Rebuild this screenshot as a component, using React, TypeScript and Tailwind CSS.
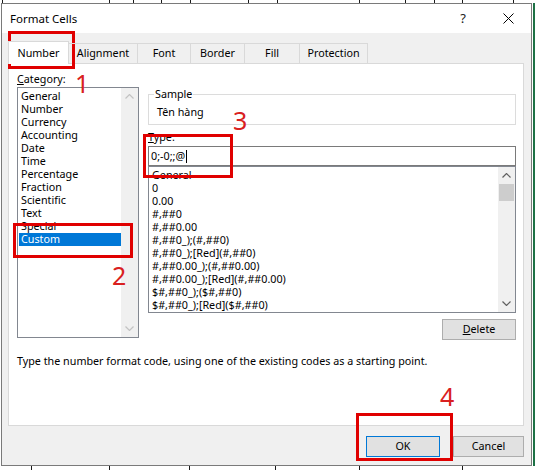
import React from 'react';

const categories = [
  'General',
  'Number',
  'Currency',
  'Accounting',
  'Date',
  'Time',
  'Percentage',
  'Fraction',
  'Scientific',
  'Text',
  'Special',
  'Custom',
];

const formats = [
  'General',
  '0',
  '0.00',
  '#,##0',
  '#,##0.00',
  '#,##0_);(#,##0)',
  '#,##0_);[Red](#,##0)',
  '#,##0.00_);(#,##0.00)',
  '#,##0.00_);[Red](#,##0.00)',
  '$#,##0_);($#,##0)',
  '$#,##0_);[Red]($#,##0)',
];

const tabs = [
  { label: 'Number', w: 'w-[61px]' },
  { label: 'Alignment', w: 'w-[69px]' },
  { label: 'Font', w: 'w-[53px]' },
  { label: 'Border', w: 'w-[54px]' },
  { label: 'Fill', w: 'w-[55px]' },
  { label: 'Protection', w: 'w-[68px]' },
];

function Chevron({ up, className }: { up?: boolean; className: string }) {
  return (
    <svg width="9" height="5" viewBox="0 0 9 5" className={className}>
      <path
        d={up ? 'M0.5 4.5 4.5 0.5 8.5 4.5' : 'M0.5 0.5 4.5 4.5 8.5 0.5'}
        fill="none"
        stroke="currentColor"
        strokeWidth={1.2}
      />
    </svg>
  );
}

function ScrollBar({ enabled }: { enabled: boolean }) {
  const arrow = enabled ? 'text-[#606060]' : 'text-[#c3c3c3]';
  return (
    <div className="w-[17px] bg-[#f0f0f0] flex flex-col">
      <div className="h-[17px] flex items-center justify-center">
        <Chevron up className={arrow} />
      </div>
      <div className="flex-1 flex flex-col">
        {enabled && <div className="mx-[1px] h-[17px] bg-[#cdcdcd]" />}
      </div>
      <div className="h-[17px] flex items-center justify-center">
        <Chevron className={arrow} />
      </div>
    </div>
  );
}

function SheetStrip({ h, ticks }: { h: number; ticks: number[] }) {
  return (
    <svg width="536" height={h} className="block">
      <rect x={0} y={0} width={536} height={h} fill="#ffffff" />
      {ticks.map((x) => (
        <rect key={x} x={x} y={0} width={1} height={h} fill="#1a1a1a" />
      ))}
    </svg>
  );
}

function Btn({ children, w, def }: { children: React.ReactNode; w: string; def?: boolean }) {
  return (
    <div
      className={`${w} h-[21px] flex items-center justify-center bg-[#e1e1e1] border ${
        def ? 'border-[#0078d7]' : 'border-[#adadad]'
      }`}
    >
      {children}
    </div>
  );
}

export default function App() {
  return (
    <div className="relative w-[536px] h-[470px] overflow-hidden bg-white text-black text-[10.75px] leading-[13px] font-['Noto_Sans',sans-serif]">
      <SheetStrip h={3} ticks={[2, 109, 133, 161, 190, 248, 277, 359, 405, 434, 462, 513]} />

      <div className="flex h-[463px]">
        <div className="w-px" />

        {/* Dialog */}
        <div className="w-[531px] h-full border border-[#7a7a7a] flex flex-col">
          {/* Title bar */}
          <div className="h-[29px] bg-white flex items-center">
            <span className="pl-[8px] text-[11.5px]">Format Cells</span>
            <div className="ml-auto flex h-full">
              <div className="w-[46px] flex items-center justify-center text-[13px] text-[#222]">?</div>
              <div className="w-[45px] flex items-center justify-center">
                <svg width="11" height="11" viewBox="0 0 11 11">
                  <path d="M0.5 0.5 10.5 10.5M10.5 0.5 0.5 10.5" stroke="#000" strokeWidth={1} fill="none" />
                </svg>
              </div>
            </div>
          </div>

          {/* Body */}
          <div className="flex-1 bg-[#f0f0f0] pl-[6px] pr-[7px] pt-[8px] flex flex-col">
            {/* Tabs */}
            <div className="flex h-[22px] relative z-10">
              {tabs.map((t, i) =>
                i === 0 ? (
                  <div
                    key={t.label}
                    className={`${t.w} h-[23px] bg-white border-l border-t border-r border-[#d9d9d9] flex items-center justify-center`}
                  >
                    {t.label}
                  </div>
                ) : (
                  <div
                    key={t.label}
                    className={`${t.w} mt-[2px] h-[20px] border-t border-r border-[#d9d9d9] flex items-center justify-center`}
                  >
                    {t.label}
                  </div>
                ),
              )}
            </div>

            {/* Panel */}
            <div className="h-[363px] bg-white border border-[#d9d9d9] pl-[8px] pt-[7px] flex flex-col">
              <div className="flex">
                {/* Category */}
                <div className="w-[122px] flex flex-col">
                  <div className="h-[16px] leading-[16px]">
                    <span className="underline">C</span>ategory:
                  </div>
                  <div className="h-[251px] border border-[#828790] flex">
                    <div className="flex-1 pt-[2px] flex flex-col">
                      {categories.map((c) =>
                        c === 'Custom' ? (
                          <div key={c} className="h-[13px] ml-[1px] pl-[2px] bg-[#0078d7] text-white">
                            {c}
                          </div>
                        ) : (
                          <div key={c} className="h-[13px] pl-[3px]">
                            {c}
                          </div>
                        ),
                      )}
                    </div>
                    <ScrollBar enabled={false} />
                  </div>
                </div>

                {/* Right column */}
                <div className="ml-[9px] w-[368px] flex flex-col">
                  <fieldset className="mt-[17px] border border-[#dcdcdc] px-[8px] pb-[5px]">
                    <legend className="ml-[-3px] px-[1px] leading-[13px]">Sample</legend>
                    <div className="pt-[5px]">Tên hàng</div>
                  </fieldset>

                  <div className="mt-[6px] h-[13px]">
                    <span className="underline">T</span>ype:
                  </div>
                  <div className="mt-[2px] h-[20px] border border-[#7a7a7a] pl-[2px] flex items-center">
                    <span>0;-0;;@</span>
                    <span className="ml-[1px] w-px h-[13px] bg-black" />
                  </div>
                  <div className="h-[147px] border border-[#828790] flex overflow-hidden">
                    <div className="flex-1 pt-[2px] pl-[3px] flex flex-col overflow-hidden">
                      {formats.map((f) => (
                        <div key={f} className="h-[13px] shrink-0 whitespace-nowrap">
                          {f}
                        </div>
                      ))}
                    </div>
                    <ScrollBar enabled />
                  </div>

                  <div className="mt-[6px] self-end">
                    <Btn w="w-[74px]">
                      <span className="underline">D</span>elete
                    </Btn>
                  </div>
                </div>
              </div>

              <div className="mt-[15px]">
                Type the number format code, using one of the existing codes as a starting point.
              </div>
            </div>

            {/* Footer */}
            <div className="mt-[10px] flex justify-end gap-[13px]">
              <Btn w="w-[74px]" def>
                OK
              </Btn>
              <Btn w="w-[71px]">Cancel</Btn>
            </div>
          </div>
        </div>

        <div className="w-[4px] flex">
          <div className="w-px" />
          <div className="w-[2px] bg-[#1e7145]" />
        </div>
      </div>

      <SheetStrip h={4} ticks={[31, 109, 189, 275, 359, 462]} />

      {/* Red annotations */}
      <div className="absolute left-[8px] top-[31px] w-[67px] h-[38px] border-[3px] border-[#e00000]" />
      <div className="absolute left-[75px] top-[71px] w-[14px] text-center text-[25px] leading-none text-[#d92020]">1</div>

      <div className="absolute left-[13px] top-[223px] w-[120px] h-[35px] border-[3px] border-[#e00000]" />
      <div className="absolute left-[112px] top-[263px] w-[14px] text-center text-[25px] leading-none text-[#d92020]">2</div>

      <div className="absolute left-[143px] top-[134px] w-[90px] h-[44px] border-[3px] border-[#e00000]" />
      <div className="absolute left-[233px] top-[108px] w-[14px] text-center text-[25px] leading-none text-[#d92020]">3</div>

      <div className="absolute left-[356px] top-[413px] w-[97px] h-[48px] border-[3px] border-[#e00000]" />
      <div className="absolute left-[440px] top-[384px] w-[14px] text-center text-[25px] leading-none text-[#d92020]">4</div>
    </div>
  );
}
